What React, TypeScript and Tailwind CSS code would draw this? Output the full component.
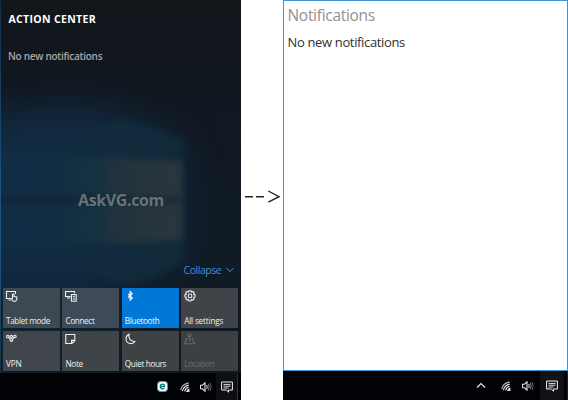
import type { ReactNode } from "react";

function Wallpaper() {
  return (
    <svg className="absolute inset-0" width="241" height="373" viewBox="0 0 241 373" aria-hidden="true">
      <defs>
        <linearGradient id="base" x1="0" y1="0" x2="0" y2="1">
          <stop offset="0" stopColor="#11161b" />
          <stop offset="0.22" stopColor="#11171f" />
          <stop offset="0.5" stopColor="#101a25" />
          <stop offset="0.8" stopColor="#101b24" />
          <stop offset="1" stopColor="#0c1720" />
        </linearGradient>
        <linearGradient id="pane" gradientUnits="userSpaceOnUse" x1="0" y1="0" x2="182" y2="0">
          <stop offset="0" stopColor="#112c45" />
          <stop offset="0.33" stopColor="#112d42" />
          <stop offset="0.38" stopColor="#113041" />
          <stop offset="0.56" stopColor="#153241" />
          <stop offset="0.64" stopColor="#22333d" />
          <stop offset="1" stopColor="#2b363d" />
        </linearGradient>
        <linearGradient id="beam" gradientUnits="userSpaceOnUse" x1="0" y1="0" x2="184" y2="0">
          <stop offset="0" stopColor="#112b40" />
          <stop offset="1" stopColor="#132c3b" />
        </linearGradient>
        <linearGradient id="edge" x1="0" y1="0" x2="0" y2="1">
          <stop offset="0" stopColor="#142f43" />
          <stop offset="0.35" stopColor="#1a4568" />
          <stop offset="0.5" stopColor="#1e5484" />
          <stop offset="0.7" stopColor="#1e5484" />
          <stop offset="1" stopColor="#123049" />
        </linearGradient>
        <filter id="soft" filterUnits="userSpaceOnUse" x="-60" y="60" width="340" height="320" colorInterpolationFilters="sRGB"><feGaussianBlur stdDeviation="3" /></filter>
        <filter id="haze" filterUnits="userSpaceOnUse" x="-80" y="20" width="380" height="400" colorInterpolationFilters="sRGB"><feGaussianBlur stdDeviation="17" /></filter>
      </defs>
      <rect width="241" height="373" fill="url(#base)" />
      <path d="M-40 118L70 104L130 116L182 145V258L130 285L70 300L-40 300Z" fill="#112a42" filter="url(#haze)" />
      <path d="M-40 300H130V373H-40Z" fill="#11293a" opacity="0.45" filter="url(#haze)" />
      <path d="M120 119Q155 127 183 140V262Q155 280 120 284L60 256L-20 252V142L60 145Z" fill="url(#beam)" opacity="0.85" filter="url(#soft)" />
      <path d="M-20 148L60 153L182 162V240L60 246L-20 250Z" fill="url(#pane)" filter="url(#soft)" />
      <path d="M-20 200H182" stroke="#14212f" strokeWidth="6" opacity="0.7" filter="url(#soft)" />
      <rect width="1" height="373" fill="url(#edge)" />
    </svg>
  );
}

function Icon({ children }: { children: ReactNode }) {
  return (
    <svg width="12" height="12" viewBox="0 0 12 12" fill="none" stroke="currentColor" strokeWidth="1.1" aria-hidden="true">
      {children}
    </svg>
  );
}

const icons = {
  tablet: <Icon><path d="M4.5 8.5H.5V1.5H9.5V4M2.5 10H4.8M6.5 8.5V4.3Q7.3 3.5 8 4.3V6.5L10.8 7V9.5L9.6 11.3H7.2L5.2 8.5L6.5 8.2" /></Icon>,
  connect: <Icon><path d="M5.5 6.5H.5V1.5H9.5V3.2M2 8H5.5M6.5 4.5H11.2V11.2H6.5Z" /><path d="M8.9 5.8V7.3M8.9 8.3V9.8" strokeWidth="1.6" /></Icon>,
  bluetooth: <Icon><path d="M3 4L7.2 8L5.2 10V1.7L7.2 3.7L3 7.7" strokeWidth="1.2" /></Icon>,
  settings: <Icon><path d="M5 .8H7L7.4 2.1L8.8 1.5L10.2 2.9L9.6 4.3L11 4.9V6.9L9.6 7.4L10.2 8.8L8.8 10.2L7.4 9.6L6.9 11H5L4.5 9.6L3.1 10.2L1.7 8.8L2.3 7.4L.9 6.9V4.9L2.3 4.3L1.7 2.9L3.1 1.5L4.5 2.1Z" /><circle cx="6" cy="5.9" r="1.9" /></Icon>,
  vpn: <Icon><circle cx="1.8" cy="3.5" r="1.2" /><circle cx="9" cy="3.5" r="1.2" /><circle cx="5.4" cy="3.5" r="1.2" /><circle cx="5.4" cy="7.1" r="1.3" /><path d="M2.7 4.7L4.1 6M8.1 4.7L6.7 6" /></Icon>,
  note: <Icon><path d="M.8 1.5H9.8V7.8L6.9 10.5H.8ZM9.8 7.4H6.6V10.4" /></Icon>,
  moon: <Icon><path d="M4 1.2C2.2 2.1 1 3.7 1 5.8C1 8.7 3.3 10.6 5.9 10.6C7.7 10.6 9.1 9.8 9.9 8.5C6 8.7 3 5.6 4 1.2Z" /></Icon>,
  location: <Icon><circle cx="5.5" cy="2.3" r="1.6" /><path d="M5.5 4V8.3M3.9 5.8H2.4L.8 10.7H10.2L8.6 5.8H7.1" /></Icon>,
};

const tiles = [
  { label: "Tablet mode", icon: icons.tablet, look: "bg-[#3c4852] text-[#eef0f2]", track: "tracking-[-0.36px]" },
  { label: "Connect", icon: icons.connect, look: "bg-[#3e4b56] text-[#eef0f2]", track: "tracking-[-0.35px]" },
  { label: "Bluetooth", icon: icons.bluetooth, look: "bg-[#0078d7] text-[#f0f7ff]", track: "tracking-[-0.34px]" },
  { label: "All settings", icon: icons.settings, look: "bg-[#404448] text-[#eef0f2]", track: "tracking-[-0.18px]" },
  { label: "VPN", icon: icons.vpn, look: "bg-[#3f454b] text-[#eef0f2]", track: "tracking-[-0.2px]" },
  { label: "Note", icon: icons.note, look: "bg-[#3f4449] text-[#eef0f2]", track: "tracking-[-0.3px]" },
  { label: "Quiet hours", icon: icons.moon, look: "bg-[#3f4245] text-[#eef0f2]", track: "tracking-[-0.36px]" },
  { label: "Location", icon: icons.location, look: "bg-[#3d4043] text-[#676a6d]", track: "tracking-[-0.3px]" },
];

function Wifi() {
  return (
    <svg width="10" height="10" viewBox="0 0 10 10" fill="none" stroke="#dedede" strokeWidth="1.1" aria-hidden="true">
      <path d="M.6 8.2Q2 2.2 8.8 .9" stroke="#b5b5b5" />
      <path d="M2.4 9.2Q3.4 4.2 8.8 3.1M4.6 9.4Q5.3 6.1 8.8 5.3" />
      <path d="M6.8 9.5Q7.2 7.8 8.9 7.3V9.5Z" fill="#dedede" />
    </svg>
  );
}

function Volume() {
  return (
    <svg width="12" height="10" viewBox="0 0 12 10" fill="none" stroke="#e2e2e2" aria-hidden="true">
      <path d="M.5 3.2H2.5L5 .8V9.2L2.5 6.8H.5Z" strokeWidth="1.1" />
      <path d="M6.7 3Q7.8 5 6.7 7" />
      <path d="M8.3 1.8Q10 5 8.3 8.2" stroke="#888" />
      <path d="M10 .8Q12.4 5 10 9.2" stroke="#666" />
    </svg>
  );
}

function ActionIcon() {
  return (
    <svg width="12" height="12" viewBox="0 0 12 12" fill="none" stroke="#f0f0f0" aria-hidden="true">
      <path d="M.6 1H11.4V9H7.5V11.2L5.3 9H.6Z" />
      <path d="M2.5 3.4H9.5M2.5 5.2H9.5M2.5 7H7.5" strokeWidth="0.9" />
    </svg>
  );
}

function EsetIcon() {
  return (
    <svg width="11" height="11" viewBox="0 0 11 11" aria-hidden="true">
      <rect x=".5" y=".5" width="10" height="10" rx="3" fill="#f4ffff" stroke="#3ca5ae" />
      <path d="M3.4 5.5H7.5Q7.5 3.2 5.5 3.2Q3.3 3.2 3.3 5.5Q3.3 7.8 5.6 7.8Q6.8 7.8 7.4 7.2" fill="none" stroke="#087d89" strokeWidth="1.3" />
    </svg>
  );
}

export default function App() {
  return (
    <main className="flex h-[400px] w-[568px] overflow-hidden bg-white font-['Open_Sans','Noto_Sans',sans-serif]">
      <section className="flex w-[241px] shrink-0 flex-col">
        <div className="relative h-[373px] bg-[#111820]">
          <Wallpaper />
          <div className="relative flex h-full flex-col">
            <h1 className="mt-[11px] pl-[8.5px] text-[10.5px] leading-4 font-bold tracking-[0.33px] whitespace-nowrap text-white">ACTION CENTER</h1>
            <p className="mt-[21px] pl-2 text-[10px] leading-4 font-semibold tracking-[-0.28px] whitespace-nowrap text-[#a4a7aa]">No new notifications</p>
            <p className="mt-[124px] h-6 pl-[78px] text-[16px] leading-6 font-bold tracking-[-0.38px] text-[#66737b]">AskVG.com</p>
            <div className="mt-[50px] flex h-4 items-center pl-[183.5px] text-[#3f91d4]">
              <span className="w-[42px] text-[10.5px] leading-4 tracking-[-0.45px]">Collapse</span>
              <svg width="8" height="6" viewBox="0 0 8 6" fill="none" stroke="currentColor" aria-hidden="true"><path d="M.5 1L4 4.7L7.5 1" /></svg>
            </div>
            <div className="mt-[10px] grid grid-cols-[57px_57px_57px_57px] gap-x-[2.4px] gap-y-[3px] pl-[3px]">
              {tiles.map((tile) => (
                <div key={tile.label} className={`flex h-10 flex-col justify-between pt-[2px] pl-[3px] ${tile.look}`}>
                  {tile.icon}
                  <span className={`mb-[1px] text-[8.2px] leading-3 font-medium whitespace-nowrap ${tile.track}`}>{tile.label}</span>
                </div>
              ))}
            </div>
          </div>
        </div>
        <footer className="flex h-[27px] items-center bg-[#010206] pl-[157px]">
          <EsetIcon />
          <div className="ml-[12px]"><Wifi /></div>
          <div className="ml-[10px]"><Volume /></div>
          <div className="ml-1 flex h-full w-[21px] items-center justify-center bg-[#0d0f12]"><ActionIcon /></div>
          <div className="h-full w-px bg-[#303236]" />
        </footer>
      </section>

      <div className="flex w-[42px] shrink-0 items-start pt-[190px] pl-1">
        <svg width="36" height="13" viewBox="0 0 36 13" fill="none" stroke="#222" strokeWidth="1.4" aria-hidden="true">
          <path d="M0 6.7H8M11 6.7H19M23.3 1L34 6.7L23.3 12.2" />
        </svg>
      </div>

      <section className="flex w-[285px] shrink-0 flex-col">
        <div className="h-[371px] border border-[#3f95d8] bg-white pl-[3.5px]">
          <h2 className="mt-1 text-[15.5px] leading-5 font-normal tracking-[-0.3px] whitespace-nowrap text-[#929292]">Notifications</h2>
          <p className="mt-[7px] text-[13px] leading-5 tracking-[-0.35px] whitespace-nowrap text-[#303030]">No new notifications</p>
        </div>
        <footer className="flex h-[29px] items-center bg-[#010206] pl-[193px]">
          <svg width="10" height="7" viewBox="0 0 10 7" fill="none" stroke="#e5e5e5" strokeWidth="1.2" aria-hidden="true"><path d="M1 5.5L5 1.5L9 5.5" /></svg>
          <div className="ml-[15px]"><Wifi /></div>
          <div className="ml-[11px]"><Volume /></div>
          <div className="ml-[6px] flex h-full w-[24px] items-center justify-center bg-[#111216]"><ActionIcon /></div>
          <div className="ml-[3px] h-full w-px bg-[#202226]" />
        </footer>
      </section>
    </main>
  );
}
